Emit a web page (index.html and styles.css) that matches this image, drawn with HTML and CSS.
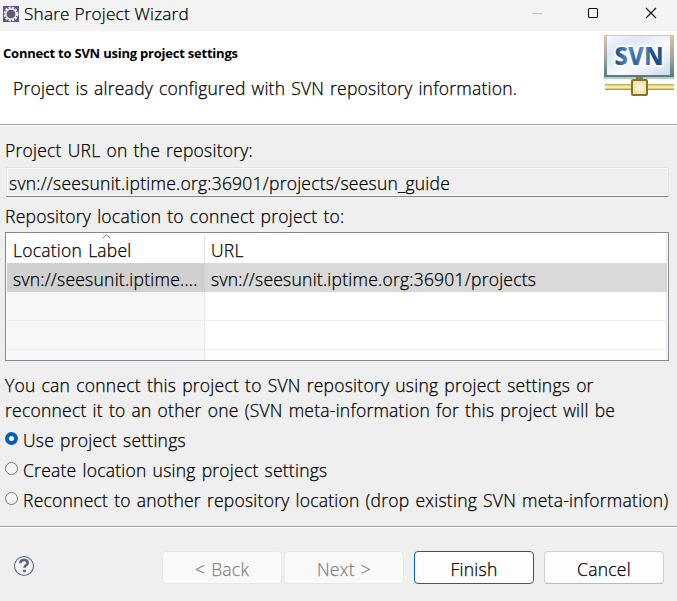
FILE: index.html
```html
<!DOCTYPE html>
<html lang="en">
<head>
<meta charset="utf-8">
<title>Share Project Wizard</title>
<link rel="stylesheet" href="styles.css">
</head>
<body>
<div class="window">
  <header class="titlebar">
    <svg class="app-icon" width="16" height="16" viewBox="0 0 16 16">
      <rect width="16" height="16" fill="#67518f"/>
      <circle cx="8" cy="8" r="6.2" fill="none" stroke="#f2eef2" stroke-width="2.4" stroke-dasharray="2.1 1.15"/>
      <circle cx="8" cy="8" r="5" fill="#55506f" stroke="#eeeaf0" stroke-width="1.3"/>
      <path d="M4 6h8M4 8h8M4 10h8" stroke="#77718d" stroke-width=".7"/>
    </svg>
    <span class="title">Share Project Wizard</span>
    <svg class="controls" width="128" height="12" viewBox="0 0 128 12" fill="none">
      <path d="M1 6.5h10" stroke="#c4c4c4"/>
      <rect x="57.5" y="1.5" width="9" height="9" rx="1" stroke="#111" stroke-width="1.1"/>
      <path d="M115 1l10 10M125 1l-10 10" stroke="#111" stroke-width="1.1"/>
    </svg>
  </header>

  <section class="banner">
    <div class="banner-text">
      <h1 class="heading">Connect to SVN using project settings</h1>
      <p class="message">Project is already configured with SVN repository information.</p>
    </div>
    <svg class="svn-logo" width="71" height="62" viewBox="0 0 71 62">
      <defs>
        <linearGradient id="frame" x1="0" y1="0" x2="0" y2="1">
          <stop offset="0" stop-color="#e4c49f"/><stop offset=".5" stop-color="#9fa9a0"/><stop offset="1" stop-color="#58797c"/>
        </linearGradient>
        <linearGradient id="panel" x1="0" y1="0" x2="1" y2="1">
          <stop offset="0" stop-color="#f8fafd"/><stop offset=".25" stop-color="#dfe7f5"/><stop offset=".6" stop-color="#f8fafd"/><stop offset="1" stop-color="#cfdaf0"/>
        </linearGradient>
        <linearGradient id="letters" x1="0" y1="0" x2="1" y2="0">
          <stop offset="0" stop-color="#164a82"/><stop offset=".3" stop-color="#6290c2"/><stop offset=".42" stop-color="#2e629c"/><stop offset=".6" stop-color="#6996c6"/><stop offset=".78" stop-color="#174a80"/><stop offset="1" stop-color="#205990"/>
        </linearGradient>
        <linearGradient id="cable" x1="0" y1="0" x2="0" y2="1">
          <stop offset="0" stop-color="#a8974a"/><stop offset=".25" stop-color="#e5d785"/><stop offset=".55" stop-color="#fbf3b8"/><stop offset=".8" stop-color="#d5c66b"/><stop offset="1" stop-color="#8d7b30"/>
        </linearGradient>
        <radialGradient id="node">
          <stop offset="0" stop-color="#fff9e8"/><stop offset="1" stop-color="#f2dca5"/>
        </radialGradient>
      </defs>
      <rect x="0" y="0" width="70" height="42" fill="url(#frame)"/>
      <rect x="3" y="1" width="63" height="39" fill="url(#panel)"/>
      <rect x="0" y="42" width="70" height="2" fill="#b8cbc9"/>
      <text class="svn-halo" x="10.500" y="30" textLength="49" lengthAdjust="spacingAndGlyphs">SVN</text>
      <text class="svn-word" x="10.500" y="30" textLength="49" lengthAdjust="spacingAndGlyphs">SVN</text>
      <rect x="32" y="42" width="7" height="3" fill="#8d803f"/>
      <rect x="1" y="49" width="69" height="6" fill="url(#cable)"/>
      <rect x="28" y="45" width="15" height="15" rx="1" fill="url(#node)" stroke="#877528" stroke-width="2"/>
    </svg>
  </section>

  <main class="content">
    <div class="label url-label">Project URL on the repository:</div>
    <div class="url-field">svn://seesunit.iptime.org:36901/projects/seesun_guide</div>
    <div class="label list-label">Repository location to connect project to:</div>

    <div class="table">
      <div class="row head">
        <div class="cell name">Location Label
          <svg class="sort" width="9" height="5" viewBox="0 0 9 5" fill="none"><path d="M.7 4.4L4.5.8l3.8 3.6" stroke="#777"/></svg>
        </div>
        <div class="cell url">URL</div>
      </div>
      <div class="row selected">
        <div class="cell name">svn://seesunit.iptime....</div>
        <div class="cell url">svn://seesunit.iptime.org:36901/projects</div>
      </div>
      <div class="row"><div class="cell name"></div><div class="cell url"></div></div>
      <div class="row"><div class="cell name"></div><div class="cell url"></div></div>
      <div class="row last"><div class="cell name"></div><div class="cell url"></div></div>
    </div>

    <p class="note"><span class="line-a">You can connect this project to SVN repository using project settings or</span><br><span class="line-b">reconnect it to an other one (SVN meta-information for this project will be</span></p>

    <div class="options">
      <div class="option"><span class="radio checked"></span><span class="opt-a">Use project settings</span></div>
      <div class="option"><span class="radio"></span><span class="opt-b">Create location using project settings</span></div>
      <div class="option"><span class="radio"></span><span class="opt-c">Reconnect to another repository location (drop existing SVN meta-information)</span></div>
    </div>
  </main>

  <footer class="footer">
    <svg class="help" width="22" height="22" viewBox="0 0 22 22" fill="none">
      <circle cx="11" cy="11" r="9.5" stroke="#5b6883" stroke-width="1.100" fill="#f3f3f4"/>
      <path d="M7.300 8.200C7.400 6 9 5 11.100 5c2.200 0 3.600 1 3.600 2.900 0 2.300-3.200 2.500-3.300 4.900" stroke="#536481" stroke-width="2.500"/>
      <rect x="10" y="14.700" width="2.800" height="2.600" rx=".8" fill="#536481"/>
    </svg>
    <div class="button disabled">&lt; Back</div>
    <div class="button disabled next">Next &gt;</div>
    <div class="button primary">Finish</div>
    <div class="button">Cancel</div>
  </footer>
</div>
</body>
</html>
```

FILE: styles.css
```css
* { box-sizing: border-box; }

body {
  margin: 0;
  background: #efefef;
  color: #000;
  font: 17.5px/25px "Open Sans", "Noto Sans", sans-serif;
  font-weight: 300;
  word-spacing: 1.25px;
  letter-spacing: .235px;
  -webkit-text-stroke: .25px currentColor;
}

.window {
  width: 677px;
  height: 601px;
  display: flex;
  flex-direction: column;
  overflow: hidden;
  white-space: nowrap;
}

.titlebar {
  height: 31px;
  padding: 0 18px 4px 3px;
  display: flex;
  align-items: center;
  background: #f3f3f3;
}
.title { margin-left: 5px; word-spacing: 0; font-size: 17.2px; letter-spacing: .2px; }
.controls { margin-left: auto; position: relative; top: -1px; }

.banner {
  height: 95px;
  display: flex;
  justify-content: space-between;
  background: #fff;
  border-bottom: 1px solid #fff;
  box-shadow: inset 0 -1px #a0a0a0;
}
.heading {
  margin: 12px 0 0 3px;
  font-size: 13px;
  line-height: 20px;
  font-weight: 700;
  word-spacing: 0;
  letter-spacing: -.22px;
  -webkit-text-stroke: 0;
}
.message { margin: 13px 0 0 13px; word-spacing: 1.1px; }
.svn-logo { margin: 4px 2px 0 0; -webkit-text-stroke: 0; }
.svn-word, .svn-halo {
  font-family: "Noto Sans", sans-serif;
  font-size: 24px;
  font-weight: 800;
  letter-spacing: 0;
  fill: url(#letters);
}
.svn-halo { fill: #fff; stroke: #fff; stroke-width: 4px; opacity: .8; }

.content { height: 400px; padding: 0 8px 0 5px; }
.url-label { padding-top: 12px; height: 41px; }

.url-field {
  height: 30px;
  margin-left: 1px;
  padding: 3px 2px 0;
  border: 1px solid #e5e5e5;
  border-bottom-color: #858585;
  box-shadow: inset 0 1px #fafafa, inset 1px 0 #fafafa, inset 0 -1px #fafafa;
}
.list-label { padding-top: 7px; height: 35px; }

.table {
  width: 664px;
  height: 129px;
  padding: 1px;
  border: 1px solid #828790;
  background: #fff;
}
.row { height: 29px; display: grid; grid-template-columns: 198px 1fr; border-bottom: 1px solid #ececec; }
.row .cell { border-right: 1px solid #e4ebf5; }
.row .name { padding-left: 6px; background: #f7f7f7; }
.row .url { padding-left: 6px; }
.head { height: 29px; border-bottom: 0; }
.head .cell { padding-top: 4px; border-color: #e2e2e2; }
.head .name { background: #fff; position: relative; }
.sort { position: absolute; left: 95px; top: 0; }
.selected .cell { padding-top: 4px; background: #d9d9d9; border-right-color: #c9d0d6; }
.selected .name { background: #d0d0d0; }
.last { height: 10px; border: 0; }

.note { margin: 12px 0 0; }

.options { margin-top: 5px; }
.option { height: 30px; display: flex; }
.option span:last-child { margin-left: 5px; }
.radio {
  flex: none;
  width: 13px;
  height: 13px;
  margin-top: 4px;
  border: 1px solid #777;
  border-radius: 50%;
  background: #f5f5f5;
}
.checked { border: 4px solid #005fb8; background: #fff; }

.footer {
  flex: 1;
  display: flex;
  align-items: flex-start;
  padding: 24px 13px 0 13px;
  border-top: 1px solid #a0a0a0;
  box-shadow: inset 0 1px #fff;
}
.help { margin-right: auto; margin-top: 4px; }
.button {
  width: 120px;
  height: 33px;
  margin-left: 10px;
  padding-top: 5px;
  text-align: center;
  border: 1px solid #d0d0d0;
  border-bottom-color: #b9b9b9;
  border-radius: 4px;
  background: #fdfdfd;
}
.disabled { color: #838383; background: #f9f9f9; border-color: #e8e8e8; }
.next { margin-left: 2px; }
.primary { border-color: #0067c0; }
```
